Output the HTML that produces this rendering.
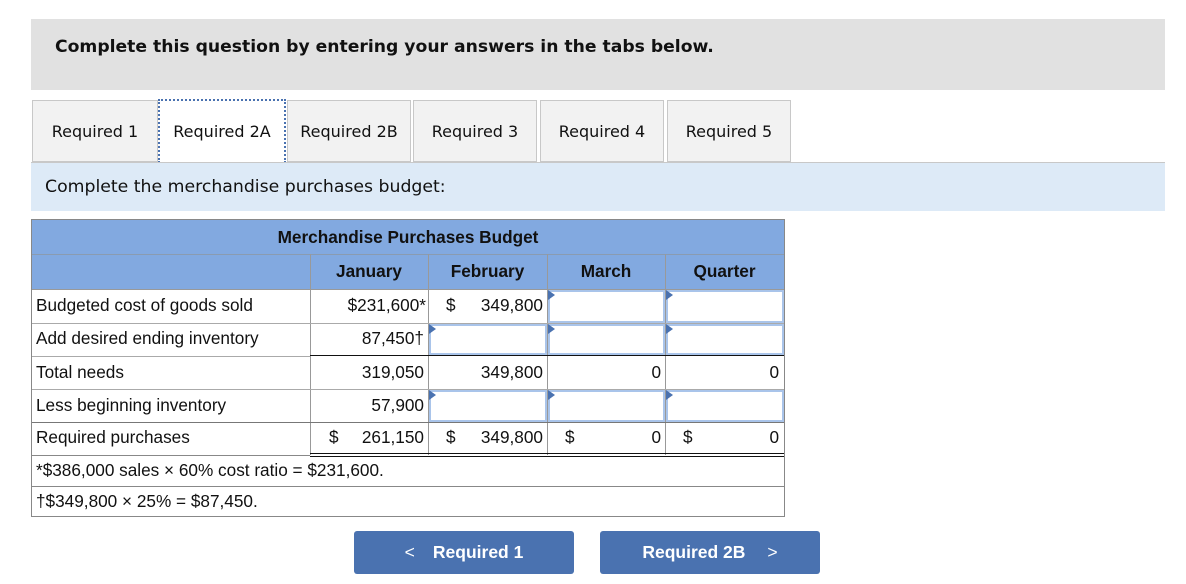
<!DOCTYPE html>
<html><head><meta charset="utf-8"><style>
*{margin:0;padding:0;box-sizing:border-box}
body{width:1186px;height:584px;background:#fff;position:relative;font-family:"Liberation Sans",Arial,sans-serif;overflow:hidden}
.a{position:absolute}
.hdr{left:31px;top:19px;width:1134px;height:71px;background:#e1e1e1}
.hdr span{position:absolute;left:24px;top:18px;font-family:"DejaVu Sans",sans-serif;font-weight:bold;font-size:17.2px;color:#111}
.tab{top:100px;height:62px;background:#f2f2f2;border:1px solid #c8c8c8;font-family:"DejaVu Sans",sans-serif;font-size:16px;color:#111;text-align:center;line-height:62px}
.tab.act{background:#fff;border:2px dotted #4a72b0;border-bottom:none;top:99px;height:64px}
.band{left:31px;top:162px;width:1134px;height:49px;background:#ddeaf7;border-top:1px solid #c8c8c8}
.band span{position:absolute;left:14px;top:14px;font-family:"DejaVu Sans",sans-serif;font-size:17.3px;color:#111}
.c{font-size:17.2px;color:#111;position:absolute;line-height:33px;white-space:nowrap}
.r{text-align:right}
.hl{position:absolute;height:1px;background:#999}
.vl{position:absolute;width:1px;background:#999}
.in{position:absolute;background:#fff;border:2px solid #a9c4ea}
.in:before{content:"";position:absolute;left:-2px;top:-2px;border-left:7px solid #4a72b0;border-top:5px solid transparent;border-bottom:5px solid transparent}
.btn{position:absolute;top:531px;height:43px;width:220px;background:#4a72b0;border-radius:3px;color:#fff;font-weight:bold;font-size:17.5px;line-height:43px;text-align:center}
</style></head><body>
<div class="a hdr"><span>Complete this question by entering your answers in the tabs below.</span></div>
<div class="a tab" style="left:32px;width:126px">Required 1</div>
<div class="a tab act" style="left:158px;width:128px">Required 2A</div>
<div class="a tab" style="left:287px;width:124px">Required 2B</div>
<div class="a tab" style="left:413px;width:124px">Required 3</div>
<div class="a tab" style="left:540px;width:124px">Required 4</div>
<div class="a tab" style="left:667px;width:124px">Required 5</div>
<div class="a band"><span>Complete the merchandise purchases budget:</span></div>

<div class="a" style="left:31px;top:219px;width:754px;height:298px;border:1px solid #888"></div>
<div class="a" style="left:32px;top:220px;width:752px;height:69px;background:#82a9e0"></div>
<div class="hl" style="left:32px;top:254px;width:752px;background:#8a9bb0"></div>
<div class="c" style="left:32px;top:221px;width:752px;text-align:center;font-weight:bold">Merchandise Purchases Budget</div>
<div class="vl" style="left:310px;top:254px;height:201px"></div>
<div class="vl" style="left:428px;top:254px;height:201px"></div>
<div class="vl" style="left:547px;top:254px;height:201px"></div>
<div class="vl" style="left:665px;top:254px;height:201px"></div>
<div class="c" style="left:310px;top:255px;width:118px;text-align:center;font-weight:bold">January</div>
<div class="c" style="left:428px;top:255px;width:119px;text-align:center;font-weight:bold">February</div>
<div class="c" style="left:547px;top:255px;width:118px;text-align:center;font-weight:bold">March</div>
<div class="c" style="left:665px;top:255px;width:119px;text-align:center;font-weight:bold">Quarter</div>
<div class="hl" style="left:32px;top:289px;width:752px"></div>
<div class="hl" style="left:32px;top:323px;width:752px;background:#aaa"></div>
<div class="hl" style="left:32px;top:356px;width:278px;background:#aaa"></div>
<div class="hl" style="left:310px;top:355px;width:474px;background:#111"></div>
<div class="hl" style="left:32px;top:389px;width:752px;background:#aaa"></div>
<div class="hl" style="left:32px;top:422px;width:752px;background:#777"></div>
<div class="hl" style="left:32px;top:455px;width:278px;background:#888"></div>
<div class="hl" style="left:310px;top:453px;width:474px;background:#111"></div>
<div class="hl" style="left:310px;top:456px;width:474px;background:#111"></div>
<div class="hl" style="left:32px;top:486px;width:752px;background:#888"></div>

<div class="c" style="left:36px;top:289px">Budgeted cost of goods sold</div>
<div class="c" style="left:36px;top:322px">Add desired ending inventory</div>
<div class="c" style="left:36px;top:356px">Total needs</div>
<div class="c" style="left:36px;top:389px">Less beginning inventory</div>
<div class="c" style="left:36px;top:421px">Required purchases</div>
<div class="c" style="left:36px;top:454px">*$386,000 sales × 60% cost ratio = $231,600.</div>
<div class="c" style="left:36px;top:485px">†$349,800 × 25% = $87,450.</div>

<div class="c r" style="left:310px;top:289px;width:116px">$231,600*</div>
<div class="c" style="left:446px;top:289px">$</div>
<div class="c r" style="left:428px;top:289px;width:115px">349,800</div>
<div class="in" style="left:548px;top:290px;width:117px;height:33px"></div>
<div class="in" style="left:666px;top:290px;width:118px;height:33px"></div>

<div class="c r" style="left:310px;top:322px;width:114px">87,450†</div>
<div class="in" style="left:429px;top:324px;width:118px;height:31px"></div>
<div class="in" style="left:548px;top:324px;width:117px;height:31px"></div>
<div class="in" style="left:666px;top:324px;width:118px;height:31px"></div>

<div class="c r" style="left:310px;top:356px;width:114px">319,050</div>
<div class="c r" style="left:428px;top:356px;width:115px">349,800</div>
<div class="c r" style="left:547px;top:356px;width:114px">0</div>
<div class="c r" style="left:665px;top:356px;width:114px">0</div>

<div class="c r" style="left:310px;top:389px;width:114px">57,900</div>
<div class="in" style="left:429px;top:390px;width:118px;height:32px"></div>
<div class="in" style="left:548px;top:390px;width:117px;height:32px"></div>
<div class="in" style="left:666px;top:390px;width:118px;height:32px"></div>

<div class="c" style="left:329px;top:421px">$</div>
<div class="c r" style="left:310px;top:421px;width:114px">261,150</div>
<div class="c" style="left:446px;top:421px">$</div>
<div class="c r" style="left:428px;top:421px;width:115px">349,800</div>
<div class="c" style="left:565px;top:421px">$</div>
<div class="c r" style="left:547px;top:421px;width:114px">0</div>
<div class="c" style="left:683px;top:421px">$</div>
<div class="c r" style="left:665px;top:421px;width:114px">0</div>

<div class="btn" style="left:354px"><span style="font-weight:normal;margin-right:18px">&lt;</span>Required 1</div>
<div class="btn" style="left:600px">Required 2B<span style="font-weight:normal;margin-left:22px">&gt;</span></div>
</body></html>
